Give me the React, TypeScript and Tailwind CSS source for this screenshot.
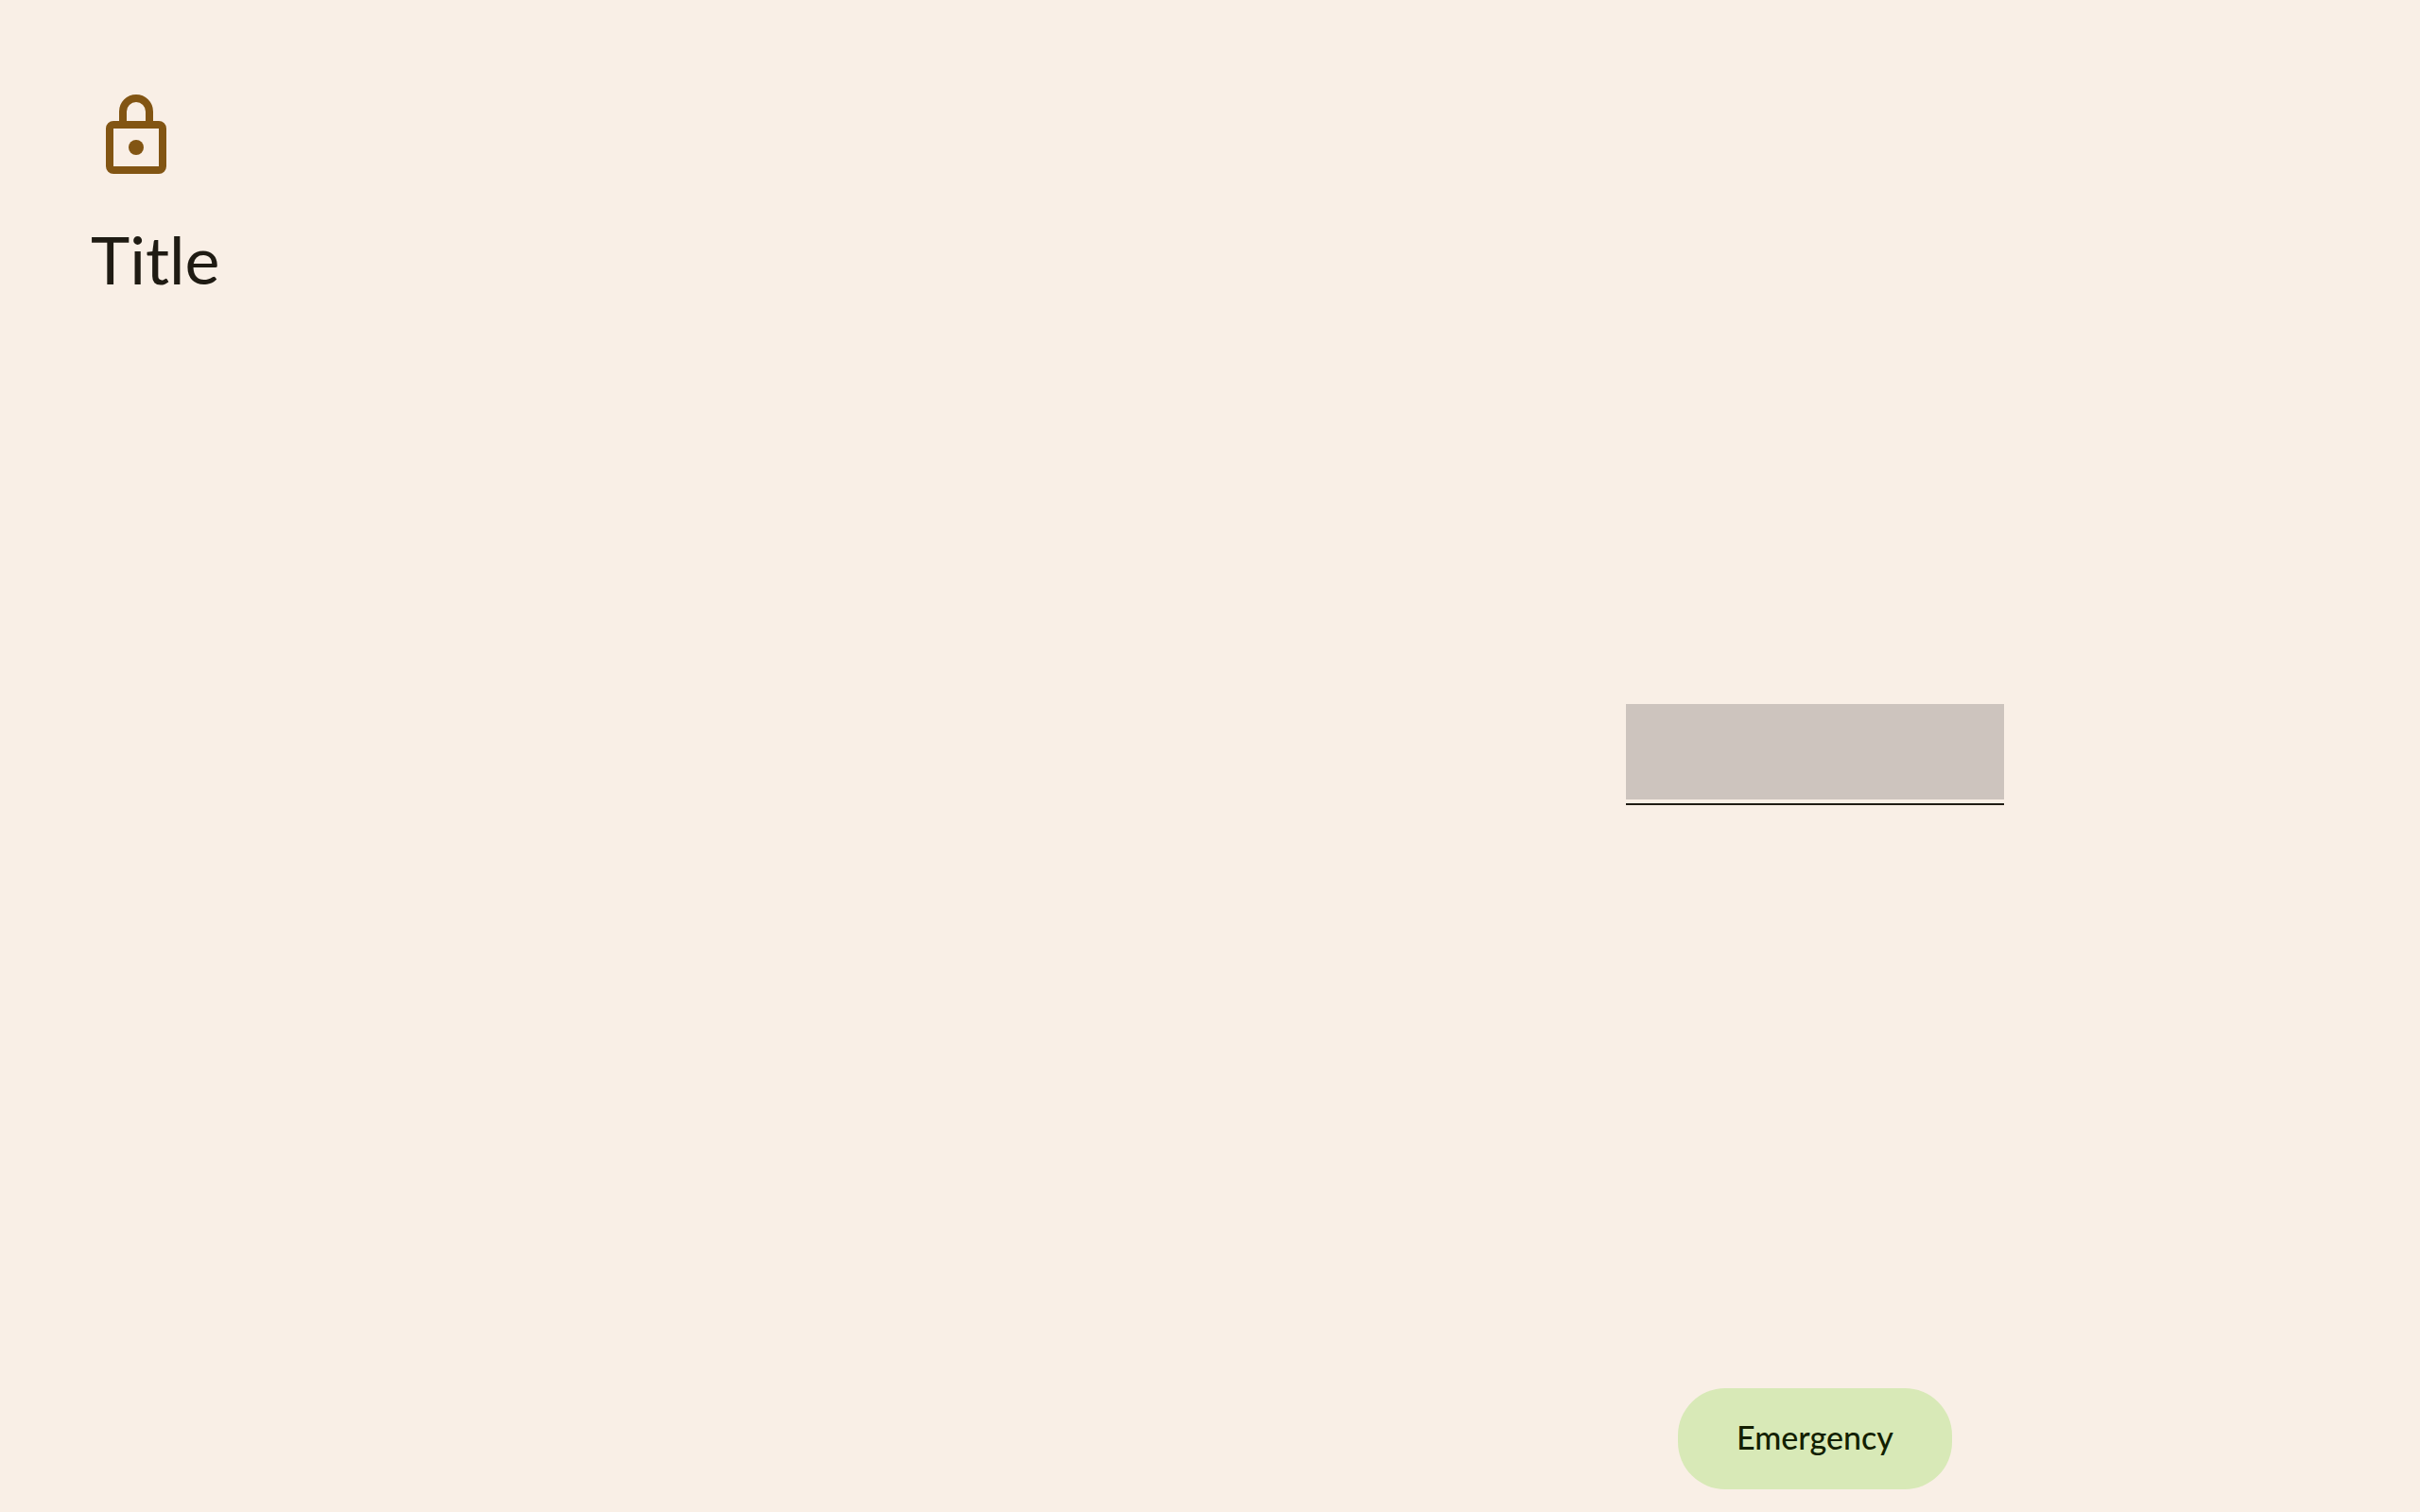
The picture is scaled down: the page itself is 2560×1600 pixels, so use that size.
function LockIcon() {
  return (
    <svg className="size-24 fill-[#825513]" viewBox="0 0 24 24" aria-hidden="true">
      <path
        fillRule="evenodd"
        d="M6 8h1.5V5.5a4.5 4.5 0 0 1 9 0V8H18a2 2 0 0 1 2 2v10a2 2 0 0 1-2 2H6a2 2 0 0 1-2-2V10a2 2 0 0 1 2-2zM9.5 8h5V5.5a2.5 2.5 0 0 0-5 0zM6 10v10h12V10z"
      />
      <circle cx="12" cy="15" r="2" />
    </svg>
  );
}

export default function App() {
  return (
    <main className="grid min-h-screen grid-cols-2 bg-[#f9efe6] font-['Lato',sans-serif] text-[#1f1b13]">
      <header className="p-24">
        <LockIcon />
        <h1 className="mt-10 text-[70px] leading-[84px]">Title</h1>
      </header>
      <form className="grid grid-rows-[1fr_auto_1fr] justify-items-center" onSubmit={(e) => e.preventDefault()}>
        <div className="row-start-2 mb-[3px] border-b-2 border-[#1f1b13] pb-1">
          <input
            type="password"
            aria-label="Password"
            className="block h-[101px] w-[400px] bg-[#cdc4be] px-4 text-center text-4xl outline-none"
          />
        </div>
        <button
          type="button"
          className="row-start-3 mb-6 h-[107px] self-end rounded-[50px] bg-[#d8e9b7] px-[62px] pb-1 text-[34px] font-medium text-[#131f00]"
        >
          Emergency
        </button>
      </form>
    </main>
  );
}
